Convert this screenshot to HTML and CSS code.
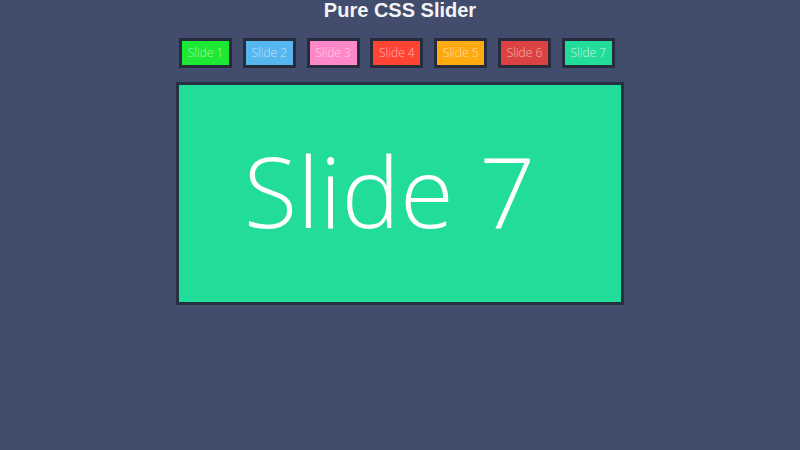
FILE: index.html
```html
<!DOCTYPE html>
<html>
<head>
<meta charset="utf-8">
<link rel="stylesheet" href="styles.css">
</head>
<body>
<h1 class="title">Pure CSS Slider</h1>
<div class="wrap">
  <nav class="tabs">
    <span class="tab t1">Slide 1</span>
    <span class="tab t2">Slide 2</span>
    <span class="tab t3">Slide 3</span>
    <span class="tab t4">Slide 4</span>
    <span class="tab t5">Slide 5</span>
    <span class="tab t6">Slide 6</span>
    <span class="tab t7">Slide 7</span>
  </nav>
  <div class="slide">Slide 7</div>
</div>
</body>
</html>
```
FILE: styles.css
```css
html, body {
  margin: 0;
  padding: 0;
  background: #424c6c;
}
body {
  width: 800px;
  height: 450px;
}
.title {
  margin: 0;
  font-family: "Liberation Sans", Arial, sans-serif;
  font-weight: bold;
  font-size: 20px;
  line-height: 20px;
  color: #f4f4f6;
  text-align: center;
}
.wrap {
  width: 448px;
  margin: 18px 0 0 176px;
}
.tabs {
  display: flex;
  gap: 10.8px;
  padding-left: 3px;
}
.tab {
  box-sizing: border-box;
  width: 53px;
  height: 30px;
  border: 3px solid #262c3c;
  font-family: "Open Sans", sans-serif;
  font-weight: 300;
  font-size: 12px;
  line-height: 24px;
  text-align: center;
  color: rgba(255, 255, 255, 0.62);
}
.t1 { background: #1de834; }
.t2 { background: #56b7ef; }
.t3 { background: #ff88c9; }
.t4 { background: #ff4433; }
.t5 { background: #ffaa11; }
.t6 { background: #dd4242; }
.t7 { background: #22dc9a; color: rgba(255, 255, 255, 0.75); }
.slide {
  box-sizing: border-box;
  margin-top: 14px;
  width: 448px;
  height: 223px;
  padding-right: 21px;
  border: 3px solid #263040;
  background: #22dc9a;
  color: #ffffff;
  font-family: "Open Sans", sans-serif;
  font-weight: 300;
  font-size: 98px;
  line-height: 210px;
  text-align: center;
}
```
